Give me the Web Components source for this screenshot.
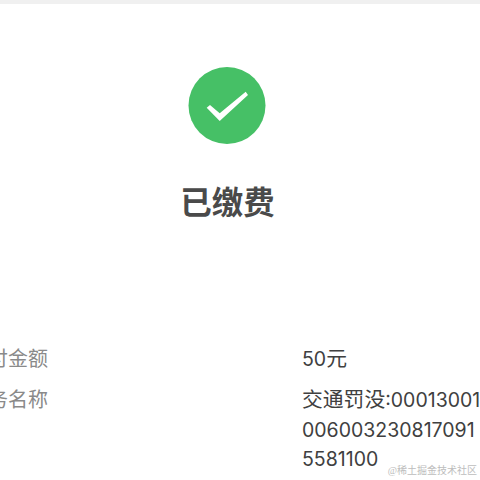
<!DOCTYPE html>
<html><head><meta charset="utf-8"><style>
html,body{margin:0;padding:0;background:#fff}
body{width:480px;height:480px;overflow:hidden;font-family:Inter,"Noto Sans CJK SC",sans-serif}
</style></head><body>
<pay-result></pay-result>
<script>
class StatusHead extends HTMLElement{constructor(){super();this.attachShadow({mode:'open'}).innerHTML=`<style>
:host{display:flex;flex-direction:column;align-items:center;width:454px;padding-top:62px}
svg{display:block;width:78px;height:78px}
h1{margin:36px 0 0;font:600 31.5px/40px "Noto Sans CJK SC",sans-serif;color:#4a4a4a;position:relative;left:.5px}
</style>
<svg viewBox="0 0 78 78"><circle cx="39" cy="39.5" r="38.5" fill="#46c066"/><path d="M22 39 L31.7 47.3 L57.7 25.7 L60 29 L31.7 55 L18.7 41.7 Z" fill="#fff"/></svg>
<h1><slot></slot></h1>`}}
customElements.define('status-head',StatusHead);
class InfoRow extends HTMLElement{constructor(){super();this.attachShadow({mode:'open'}).innerHTML=`<style>
:host{display:grid;grid-template-columns:334px 180px;font:20px/29.5px Inter,"Noto Sans CJK SC",sans-serif}
.l{color:#8a8a8a}.v{color:#404040;word-break:break-all;font-size:19.5px;margin-top:-1px;line-height:29.5px}
</style><div class="l"><slot name="label"></slot></div><div class="v"><slot name="value"></slot></div>`}}
customElements.define('info-row',InfoRow);
class PayResult extends HTMLElement{constructor(){super();this.attachShadow({mode:'open'}).innerHTML=`<style>
:host{display:block;position:relative;width:480px;height:480px;overflow:hidden;background:#fff}
.bar{height:4px;background:#f0f0f0}
.rows{display:flex;flex-direction:column;gap:11.5px;margin:125px 0 0 -32px}
.cjk{font-size:20.8px}
.mark{position:absolute;right:3px;bottom:2px;font:10px/14px "Liberation Serif","Noto Sans CJK SC",serif;color:#bdbdbd;white-space:nowrap}
</style>
<div class="bar"></div>
<status-head>已缴费</status-head>
<div class="rows">
<info-row><span slot="label">应付金额</span><span slot="value">50<span class="cjk">元</span></span></info-row>
<info-row><span slot="label">业务名称</span><span slot="value"><span class="cjk">交通罚没</span>:000130010060032308170915581100</span></info-row>
</div>
<div class="mark">@稀土掘金技术社区</div>`}}
customElements.define('pay-result',PayResult);
</script>
</body></html>
